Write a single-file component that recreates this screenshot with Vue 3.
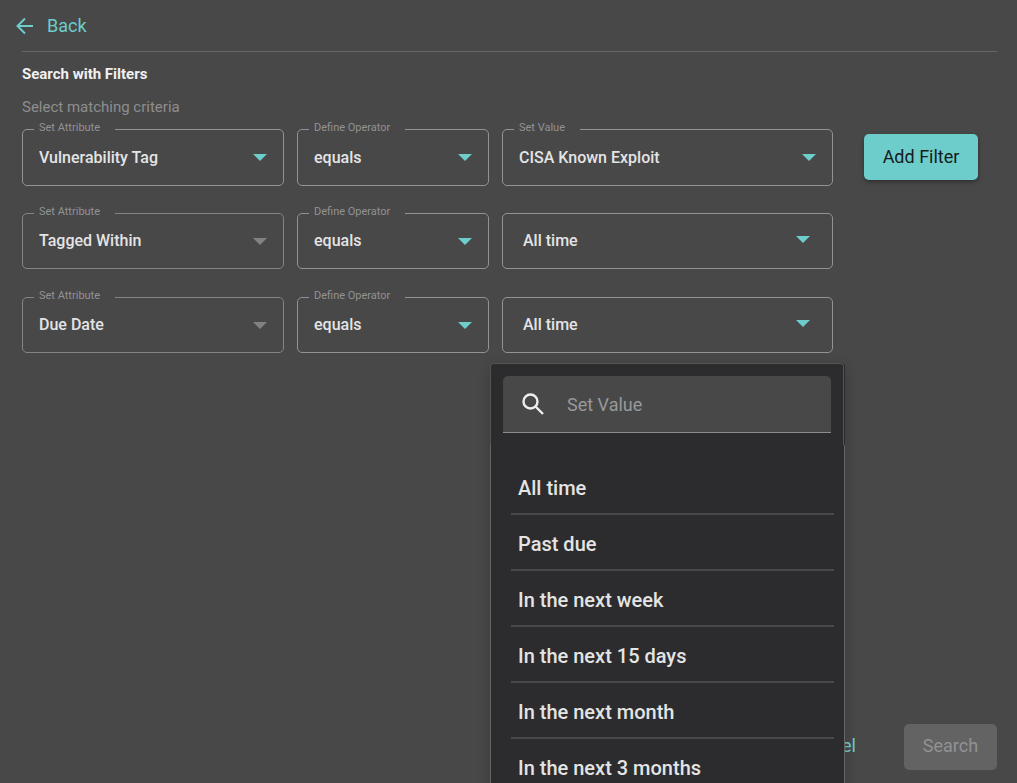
<script setup>
import { ref } from 'vue'

const rows = ref([
  { id: 1, attribute: 'Vulnerability Tag', operator: 'equals', value: 'CISA Known Exploit', labelled: true, locked: false, open: false },
  { id: 2, attribute: 'Tagged Within', operator: 'equals', value: 'All time', labelled: false, locked: true, open: false },
  { id: 3, attribute: 'Due Date', operator: 'equals', value: 'All time', labelled: false, locked: true, open: true }
])

const query = ref('')
const options = [
  'All time',
  'Past due',
  'In the next week',
  'In the next 15 days',
  'In the next month',
  'In the next 3 months'
]

function choose(row, option) {
  row.value = option
}
</script>

<template>
  <main class="page">
    <header class="top">
      <a class="back" href="#">
        <svg class="back-icon" viewBox="0 0 18 18" aria-hidden="true">
          <path d="M17 9H2M9 1.5L1.5 9L9 16.5" />
        </svg>
        <span>Back</span>
      </a>
    </header>

    <section class="body">
      <h1 class="title">Search with Filters</h1>
      <p class="hint">Select matching criteria</p>

      <div class="builder">
        <div class="rows">
          <div v-for="row in rows" :key="row.id" class="row" :class="{ dependent: row.locked }">
            <div class="field" :class="{ locked: row.locked }">
              <label class="label" :for="'attribute-' + row.id">Set Attribute</label>
              <select :id="'attribute-' + row.id" class="select" :disabled="row.locked">
                <option>{{ row.attribute }}</option>
              </select>
              <svg class="caret" viewBox="0 0 14 7" aria-hidden="true"><path d="M0 0H14L7 7Z" /></svg>
            </div>

            <div class="field">
              <label class="label" :for="'operator-' + row.id">Define Operator</label>
              <select :id="'operator-' + row.id" class="select">
                <option>{{ row.operator }}</option>
              </select>
              <svg class="caret" viewBox="0 0 14 7" aria-hidden="true"><path d="M0 0H14L7 7Z" /></svg>
            </div>

            <div class="field" :class="{ plain: !row.labelled }">
              <label v-if="row.labelled" class="label" :for="'value-' + row.id">Set Value</label>
              <select :id="'value-' + row.id" class="select" :aria-label="row.labelled ? null : 'Value'">
                <option>{{ row.value }}</option>
              </select>
              <svg class="caret" viewBox="0 0 14 7" aria-hidden="true"><path d="M0 0H14L7 7Z" /></svg>

              <div v-if="row.open" class="menu">
                <div class="menu-head">
                  <div class="search">
                    <svg class="search-icon" viewBox="0 0 24 24" aria-hidden="true">
                      <circle cx="9.5" cy="9.5" r="7" />
                      <path d="M14.5 14.5L22 22" />
                    </svg>
                    <input v-model="query" class="search-input" type="text" placeholder="Set Value" aria-label="Set Value" />
                  </div>
                </div>
                <ul class="menu-list">
                  <li v-for="option in options" :key="option" class="item">
                    <button class="option" type="button" @click="choose(row, option)">{{ option }}</button>
                  </li>
                </ul>
              </div>
            </div>
          </div>
        </div>
        <button class="button add" type="button">Add Filter</button>
      </div>
    </section>

    <footer class="footer">
      <button class="button cancel" type="button">Cancel</button>
      <button class="button submit" type="button" disabled>Search</button>
    </footer>
  </main>
</template>

<style>
body {
  background: #484849;
}
</style>

<style scoped>
.page {
  box-sizing: border-box;
  display: flex;
  flex-direction: column;
  height: 100vh;
  overflow: hidden;
  padding: 0 20px 13px 22px;
  background: #484849;
  color: #e4e4e4;
  font-family: Roboto, "Liberation Sans", sans-serif;
}

.page * {
  box-sizing: border-box;
}

.top {
  display: flex;
  align-items: center;
  height: 52px;
  border-bottom: 1px solid #666667;
}

.back {
  display: flex;
  align-items: center;
  gap: 13px;
  margin-left: -6px;
  color: #6dcdcb;
  font-size: 18px;
  line-height: 24px;
  text-decoration: none;
}

.back-icon {
  width: 18px;
  height: 18px;
  fill: none;
  stroke: currentColor;
  stroke-width: 2;
}

.title {
  margin: 12px 0 0;
  color: #f0f0f0;
  font-size: 15px;
  font-weight: 700;
  line-height: 20px;
}

.hint {
  margin: 13px 0 0;
  color: #8e8e8f;
  font-size: 15px;
  line-height: 20px;
}

.builder {
  display: flex;
  align-items: flex-start;
  gap: 31px;
  margin-top: 12px;
  padding-right: 19px;
}

.rows {
  display: flex;
  flex: 1;
  flex-direction: column;
  gap: 27px;
}

.row {
  display: grid;
  grid-template-columns: 262fr 192fr 331fr;
  gap: 13px;
}

.field {
  position: relative;
  display: flex;
  align-items: center;
  height: 57px;
  border: 1px solid #939394;
  border-radius: 5px;
}

.dependent .field {
  height: 56px;
  margin-bottom: 1px;
}

.field.locked {
  border-color: #848485;
}

.label {
  position: absolute;
  top: -10px;
  left: 11px;
  padding: 0 15px 0 5px;
  background: #484849;
  color: #929293;
  font-size: 11px;
  line-height: 16px;
}

.select {
  appearance: none;
  width: 100%;
  height: 100%;
  padding: 0 44px 0 16px;
  border: 0;
  background: transparent;
  color: #e4e4e4;
  font: 500 16px/24px Roboto, "Liberation Sans", sans-serif;
  opacity: 1;
}

.dependent .select {
  padding-bottom: 1px;
}

.plain .select {
  padding-left: 20px;
}

.caret {
  position: absolute;
  top: 24px;
  right: 16px;
  width: 14px;
  height: 7px;
  fill: #6dcdcb;
  pointer-events: none;
}

.locked .caret {
  fill: #828283;
}

.plain .caret {
  top: 22px;
  right: 22px;
}

.menu {
  position: absolute;
  z-index: 2;
  top: 65px;
  right: -13px;
  left: -13px;
  border-radius: 4px;
  background: #2c2c2e;
  box-shadow: 0 4px 14px rgba(0, 0, 0, 0.2);
}

.menu-head {
  margin-right: 1px;
  padding: 12px;
  border: 1px solid #555556;
  border-bottom: 0;
  border-radius: 4px 4px 0 0;
}

.search {
  display: flex;
  align-items: center;
  gap: 22px;
  height: 57px;
  padding: 0 18px;
  border-bottom: 1px solid #8c8c8d;
  border-radius: 5px 5px 0 0;
  background: #484849;
}

.search-icon {
  flex: none;
  width: 24px;
  height: 24px;
  fill: none;
  stroke: #ededed;
  stroke-width: 2.4;
}

.search-input {
  flex: 1;
  min-width: 0;
  padding: 2px 0 0;
  border: 0;
  outline: 0;
  background: transparent;
  color: #e4e4e4;
  font: 400 18px/24px Roboto, "Liberation Sans", sans-serif;
}

.search-input::placeholder {
  color: #99999a;
  opacity: 1;
}

.menu-list {
  margin: 0;
  padding: 14px 10px 0 20px;
  border: 1px solid #656566;
  border-top: 0;
  list-style: none;
}

.item {
  height: 56px;
  border-bottom: 2px solid #48484a;
}

.option {
  width: 100%;
  height: 100%;
  padding: 3px 7px 0;
  border: 0;
  background: transparent;
  color: #e4e4e4;
  font: 500 20px/24px Roboto, "Liberation Sans", sans-serif;
  text-align: left;
}

.button {
  height: 46px;
  padding: 0 18px;
  border: 0;
  border-radius: 5px;
  font: 400 18px/24px Roboto, "Liberation Sans", sans-serif;
  white-space: nowrap;
}

.add {
  min-width: 114px;
  margin-top: 5px;
  background: #6dcdcb;
  color: #151b1b;
  box-shadow: 0 2px 4px rgba(0, 0, 0, 0.35);
}

.footer {
  display: flex;
  align-items: center;
  justify-content: flex-end;
  gap: 48px;
  margin-top: auto;
}

.cancel {
  padding: 0 0 2px;
  background: transparent;
  color: #6dcdcb;
}

.submit {
  min-width: 93px;
  padding-bottom: 2px;
  background: #636364;
  color: #929294;
}
</style>
